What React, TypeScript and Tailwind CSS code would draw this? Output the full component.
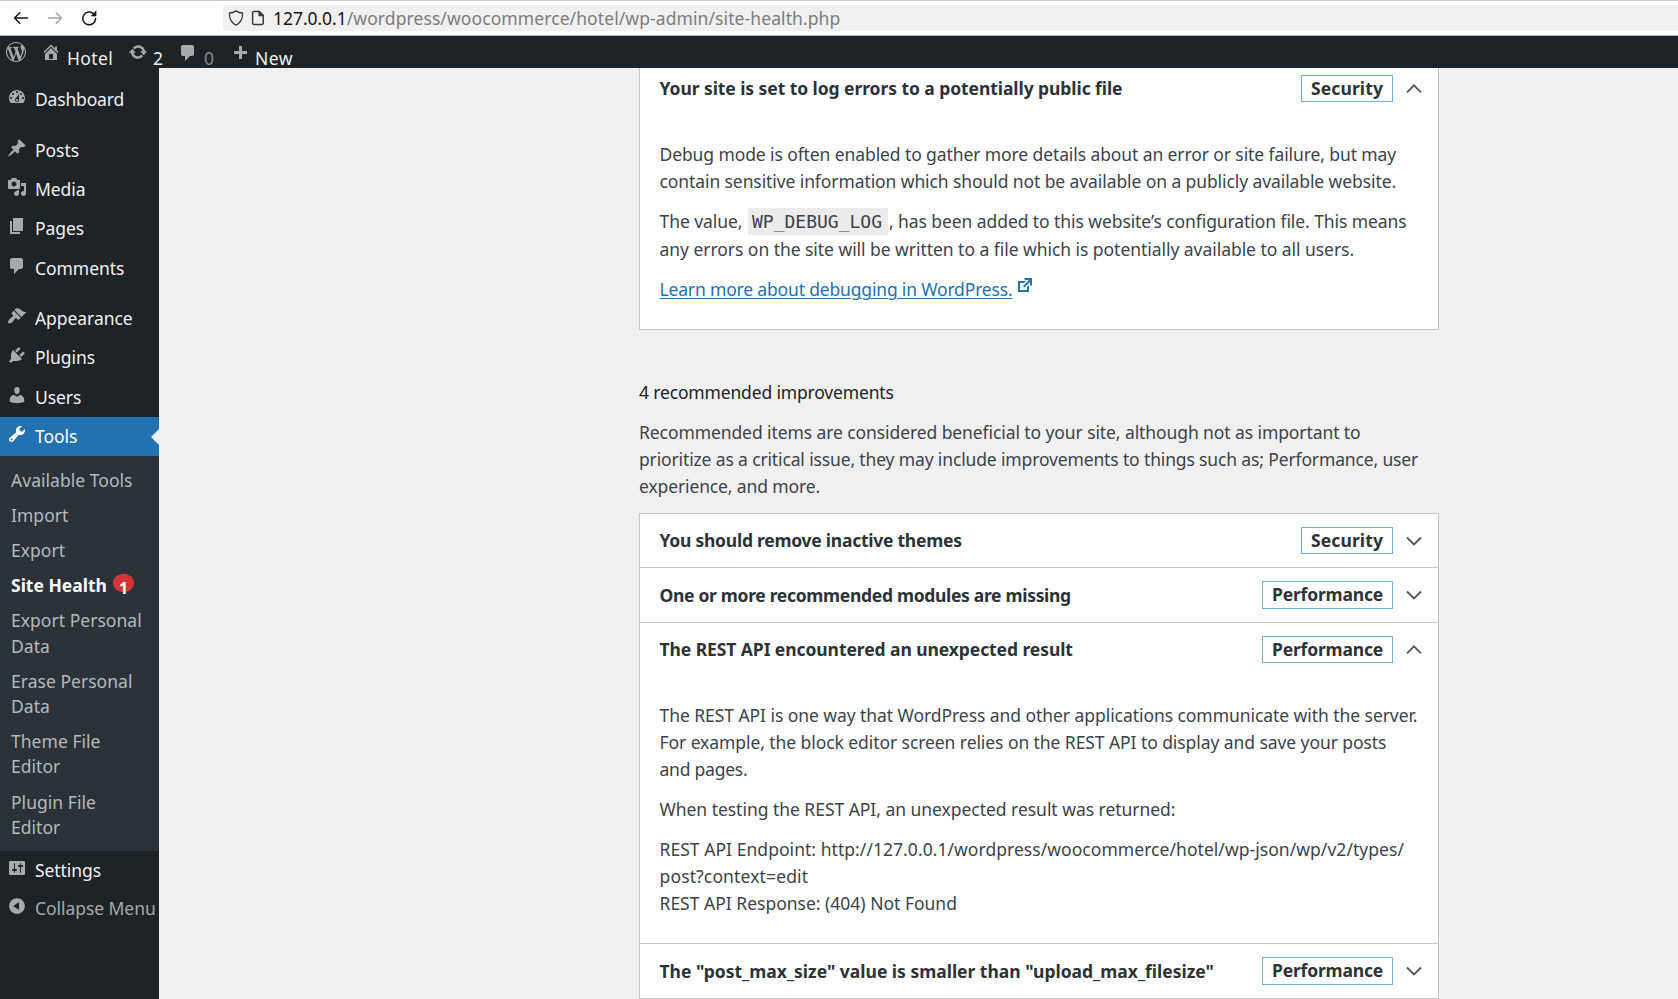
import type { ReactNode } from "react";

const icons = {
  wordpress:
    "M20 10c0-5.51-4.49-10-10-10C4.48 0 0 4.49 0 10c0 5.52 4.48 10 10 10 5.51 0 10-4.48 10-10zM7.78 15.37L4.37 6.22c.55-.02 1.17-.08 1.17-.08.5-.06.44-1.13-.06-1.11 0 0-1.45.11-2.37.11-.18 0-.37 0-.58-.01C4.12 2.69 6.87 1.11 10 1.11c2.33 0 4.45.87 6.05 2.34-.68-.11-1.65.39-1.65 1.58 0 .74.45 1.36.9 2.1.35.61.55 1.36.55 2.46 0 1.49-1.4 5-1.4 5l-3.03-8.37c.54-.02.82-.17.82-.17.5-.05.44-1.25-.06-1.22 0 0-1.44.12-2.38.12-.87 0-2.33-.12-2.33-.12-.5-.03-.56 1.2-.06 1.22l.92.08 1.26 3.41zM17.41 10c.24-.64.74-1.87.43-4.25.7 1.29 1.05 2.71 1.05 4.25 0 3.29-1.73 6.24-4.4 7.78.97-2.59 1.94-5.2 2.92-7.78zM6.1 18.09C3.12 16.65 1.11 13.53 1.11 10c0-1.3.23-2.48.72-3.59C3.25 10.3 4.67 14.2 6.1 18.09zm4.03-6.63l2.58 6.98c-.86.29-1.76.45-2.71.45-.79 0-1.57-.11-2.29-.33.81-2.38 1.62-4.74 2.42-7.1z",
  home: "M16 8.5l1.53 1.53-1.06 1.06L10 4.6l-6.47 6.49-1.06-1.06L10 2.5l4 4v-2h2v4zm-6-2.46l6 5.99V18H4v-5.97zM12 17v-5H8v5h4z",
  update:
    "M10.2 3.28c3.53 0 6.43 2.61 6.92 6h2.08l-3.5 4-3.5-4h2.32c-.45-1.97-2.21-3.45-4.32-3.45-1.45 0-2.73.71-3.54 1.78L4.95 5.66C6.23 4.2 8.11 3.28 10.2 3.28zm-.4 13.44c-3.52 0-6.43-2.61-6.92-6H.8l3.5-4c1.17 1.33 2.33 2.67 3.5 4H5.48c.45 1.97 2.21 3.45 4.32 3.45 1.45 0 2.73-.71 3.54-1.78l1.71 1.95c-1.28 1.46-3.15 2.38-5.25 2.38z",
  plus: "M17 7v3h-5v5H9v-5H4V7h5V2h3v5h5z",
  dashboard:
    "M3.76 16h12.48c1.1-1.37 1.76-3.11 1.76-5 0-4.42-3.58-8-8-8s-8 3.58-8 8c0 1.89.66 3.63 1.76 5zM10 4c.55 0 1 .45 1 1s-.45 1-1 1-1-.45-1-1 .45-1 1-1zM6 6c.55 0 1 .45 1 1s-.45 1-1 1-1-.45-1-1 .45-1 1-1zm8 0c.55 0 1 .45 1 1s-.45 1-1 1-1-.45-1-1 .45-1 1-1zm-5.37 5.55L12 7v6c0 1.1-.9 2-2 2s-2-.9-2-2c0-.57.24-1.08.63-1.45zM4 10c.55 0 1 .45 1 1s-.45 1-1 1-1-.45-1-1 .45-1 1-1zm12 0c.55 0 1 .45 1 1s-.45 1-1 1-1-.45-1-1 .45-1 1-1zm-5 3c0-.55-.45-1-1-1s-1 .45-1 1 .45 1 1 1 1-.45 1-1z",
  post: "M10.44 3.02l1.82-1.82 6.36 6.35-1.83 1.82c-1.05-.68-2.48-.57-3.41.36l-.75.75c-.92.93-1.04 2.35-.35 3.41l-1.83 1.82-2.41-2.41-2.8 2.79c-.42.42-3.38 2.71-3.8 2.29s1.86-3.39 2.28-3.81l2.79-2.79L4.1 9.36l1.83-1.82c1.05.69 2.48.57 3.4-.36l.75-.75c.93-.92 1.05-2.35.36-3.41z",
  media:
    "M13 11V4c0-.55-.45-1-1-1h-1.67L9 1H5L3.67 3H2c-.55 0-1 .45-1 1v7c0 .55.45 1 1 1h10c.55 0 1-.45 1-1zM7 4.5c1.38 0 2.5 1.12 2.5 2.5S8.38 9.5 7 9.5 4.5 8.38 4.5 7 5.62 4.5 7 4.5zM14 6h5v10.5c0 1.38-1.12 2.5-2.5 2.5S14 17.88 14 16.5s1.12-2.5 2.5-2.5c.17 0 .34.02.5.05V9h-3V6zm-4 8.05V13h2v3.5c0 1.38-1.12 2.5-2.5 2.5S7 17.88 7 16.5 8.12 14 9.5 14c.17 0 .34.02.5.05z",
  page: "M6 15V2h10v13H6zm-1 1h8v2H3V5h2v11z",
  comments:
    "M5 2h9c1.1 0 2 .9 2 2v7c0 1.1-.9 2-2 2h-2l-5 5v-5H5c-1.1 0-2-.9-2-2V4c0-1.1.9-2 2-2z",
  appearance:
    "M14.48 11.06L7.41 3.99l1.5-1.5c.5-.56 2.3-.47 3.51.32 1.21.8 1.43 1.28 2.91 2.1 1.18.64 2.45 1.26 4.45.85zm-.71.71L6.7 4.7 4.93 6.47c-.39.39-.39 1.02 0 1.41l1.06 1.06c.39.39.39 1.03 0 1.42-.6.6-1.43 1.11-2.21 1.69-.35.26-.7.53-1.01.84C1.43 14.23.4 16.08 1.4 17.07c.99 1 2.84-.03 4.18-1.36.31-.31.58-.66.85-1.02.57-.78 1.08-1.61 1.69-2.21.39-.39 1.02-.39 1.41 0l1.06 1.06c.39.39 1.02.39 1.41 0z",
  plugins:
    "M13.11 4.36L9.87 7.6 8 5.73l3.24-3.24c.35-.34 1.05-.2 1.56.32.52.51.66 1.21.31 1.55zm-8 1.77l.91-1.12 9.01 9.01-1.19.84c-.71.71-2.63 1.16-3.82 1.16H6.14L4.9 17.26c-.59.59-1.54.59-2.12 0-.59-.58-.59-1.53 0-2.12l1.24-1.24v-3.88c0-1.13.4-3.19 1.09-3.89zm7.26 3.97l3.24-3.24c.34-.35 1.04-.21 1.55.31.52.51.66 1.21.31 1.55l-3.24 3.25z",
  users:
    "M10 9.25c-2.27 0-2.73-3.44-2.73-3.44C7 4.02 7.82 2 9.97 2c2.16 0 2.98 2.02 2.71 3.81 0 0-.41 3.44-2.68 3.44zm0 2.57L12.72 10c2.39 0 4.52 2.33 4.52 4.53v2.49s-3.65 1.13-7.24 1.13c-3.65 0-7.24-1.13-7.24-1.13v-2.49c0-2.25 1.94-4.48 4.47-4.48z",
  tools:
    "M16.68 9.77c-1.34 1.34-3.3 1.67-4.95.99l-5.41 6.52c-.99.99-2.59.99-3.58 0s-.99-2.59 0-3.57l6.52-5.42c-.68-1.65-.35-3.61.99-4.95 1.28-1.28 3.12-1.62 4.72-1.06l-2.89 2.89 2.82 2.82 2.86-2.87c.53 1.58.18 3.39-1.08 4.65zM3.81 16.21c.4.39 1.04.39 1.43 0 .4-.4.4-1.04 0-1.43-.39-.4-1.03-.4-1.43 0-.39.39-.39 1.03 0 1.43z",
  settings:
    "M18 16V4c0-.55-.45-1-1-1H3c-.55 0-1 .45-1 1v12c0 .55.45 1 1 1h14c.55 0 1-.45 1-1zM8 11h1c.55 0 1 .45 1 1s-.45 1-1 1H8v1.5c0 .28-.22.5-.5.5s-.5-.22-.5-.5V13H6c-.55 0-1-.45-1-1s.45-1 1-1h1V5.5c0-.28.22-.5.5-.5s.5.22.5.5V11zm5-2h-1c-.55 0-1-.45-1-1s.45-1 1-1h1V5.5c0-.28.22-.5.5-.5s.5.22.5.5V7h1c.55 0 1 .45 1 1s-.45 1-1 1h-1v5.5c0 .28-.22.5-.5.5s-.5-.22-.5-.5V9z",
  collapse:
    "M10 2.16c4.33 0 7.84 3.51 7.84 7.84s-3.51 7.84-7.84 7.84S2.16 14.33 2.16 10 5.71 2.16 10 2.16zm2 11.72V6.12L6.18 9.97z",
  external:
    "M9 3h8v8l-2-1V6.92l-5.6 5.59-1.41-1.41L14.08 5H10zm3 12v-3l2-2v7H3V6h8L9 8H5v7h7z",
};

type IconName = keyof typeof icons;

function Icon({ name, className = "size-5" }: { name: IconName; className?: string }) {
  return (
    <svg viewBox="0 0 20 20" fill="currentColor" fillRule="evenodd" className={`shrink-0 ${className}`}>
      <path d={icons[name]} />
    </svg>
  );
}

function BrowserBar() {
  return (
    <div className="flex h-9 items-center border-y border-t-[#cccccc] border-b-[#b8b8bd] bg-white">
      <svg viewBox="0 0 16 14" className="ml-[13px] h-[14px] w-4 shrink-0 fill-none stroke-[#15141a]" strokeWidth="1.5" strokeLinecap="round" strokeLinejoin="round">
        <path d="M14.5 7H1.5M6.8 1.7L1.5 7l5.3 5.3" />
      </svg>
      <svg viewBox="0 0 16 14" className="ml-[18px] h-[14px] w-4 shrink-0 fill-none stroke-[#a5a5a8]" strokeWidth="1.5" strokeLinecap="round" strokeLinejoin="round">
        <path d="M1.5 7h13M9.2 1.7L14.5 7l-5.3 5.3" />
      </svg>
      <svg viewBox="0 0 16 16" className="ml-[18px] size-4 shrink-0 fill-none stroke-[#15141a]" strokeWidth="1.5" strokeLinecap="round">
        <path d="M14.600 8.600A6.400 6.400 0 1 1 12.800 3.900" />
        <path d="M15 1.500v4.400h-4.400z" fill="#15141a" strokeWidth="0.8" strokeLinejoin="round" />
      </svg>
      <div className="ml-[126px] flex h-[26px] grow items-center rounded-l bg-[#f0f0f0]">
        <svg viewBox="0 0 16 16" className="ml-[5px] size-4 shrink-0 fill-none stroke-[#3a3a3e]" strokeWidth="1.3" strokeLinejoin="round">
          <path d="M8 .9c2 1.4 4.2 2.1 6.6 2.1.2 5.6-2 9.8-6.6 12.1C3.400 12.800 1.200 8.600 1.400 3 3.800 3 6 2.300 8 .9z" />
        </svg>
        <svg viewBox="0 0 14 16" className="ml-[7px] h-4 w-[14px] shrink-0 fill-none stroke-[#3a3a3e]" strokeWidth="1.5" strokeLinejoin="round">
          <path d="M2.800 1.600h5.400l4 4v7.600a1.200 1.200 0 0 1-1.200 1.200H2.800a1.200 1.200 0 0 1-1.200-1.200V2.800a1.200 1.200 0 0 1 1.200-1.200z" />
          <path d="M8.200 1.600v4h4z" fill="#3a3a3e" />
        </svg>
        <div className="ml-2 flex text-[17.5px] leading-6 whitespace-nowrap">
          <span className="tracking-[-0.05px] text-[#15141a]">127.0.0.1</span>
          <span className="tracking-[0.09px] text-[#7c7c80]">/wordpress/woocommerce/hotel/wp-admin/site-health.php</span>
        </div>
      </div>
    </div>
  );
}

function AdminBar() {
  return (
    <div className="flex h-8 items-start bg-[#1d2327] text-[17.5px] leading-6 whitespace-nowrap text-[#f0f0f1]">
      <Icon name="wordpress" className="mt-[6px] ml-[6px] size-5 text-[#a7aaad]" />
      <Icon name="home" className="mt-[6px] ml-[15px] size-5 text-[#a7aaad]" />
      <span className="mt-[10px] ml-[6px] w-[48px] tracking-[0.35px]">Hotel</span>
      <Icon name="update" className="mt-[6px] ml-[13px] size-5 text-[#a7aaad]" />
      <span className="mt-[10px] ml-[5px] w-[11px]">2</span>
      <Icon name="comments" className="mt-[7px] ml-[14px] size-5 text-[#a7aaad]" />
      <span className="mt-[10px] ml-[6px] w-[11px] text-[#85898d]">0</span>
      <Icon name="plus" className="mt-2 ml-[15px] size-5 text-[#a7aaad]" />
      <span className="mt-[10px] ml-[5px] tracking-[0.45px]">New</span>
    </div>
  );
}

function MenuItem({ icon, label, tone = "normal" }: { icon: IconName; label: ReactNode; tone?: "normal" | "active" | "muted" }) {
  const row =
    tone === "active" ? "bg-[#2271b1] text-white" : tone === "muted" ? "text-[#a7aaad]" : "text-[#f0f0f1]";
  const glyph = tone === "active" ? "text-white" : "text-[#a7aaad]";
  return (
    <li className={`flex h-[39.4px] items-start ${row}`}>
      <Icon name={icon} className={`mt-[7px] ml-[7px] size-5 ${glyph}`} />
      <span className="mt-[7px] ml-2 leading-6 tracking-[-0.06px] whitespace-nowrap">{label}</span>
      {tone === "active" && (
        <svg viewBox="0 0 8 16" className="mt-3 ml-auto h-4 w-2 fill-[#f0f0f0]">
          <path d="M8 0v16L0 8z" />
        </svg>
      )}
    </li>
  );
}

function SubItem({ children }: { children: ReactNode }) {
  return <li className="py-[5px] pl-[11px] leading-[25.2px] tracking-[0.03px] whitespace-nowrap">{children}</li>;
}

function Sidebar() {
  return (
    <nav className="w-[159px] shrink-0 bg-[#1d2327] pt-3 text-[17.5px]">
      <ul>
        <MenuItem icon="dashboard" label={<span className="tracking-[-0.17px]">Dashboard</span>} />
        <li className="h-[11.300px]" />
        <MenuItem icon="post" label="Posts" />
        <MenuItem icon="media" label="Media" />
        <MenuItem icon="page" label="Pages" />
        <MenuItem icon="comments" label="Comments" />
        <li className="h-[10.500px]" />
        <MenuItem icon="appearance" label="Appearance" />
        <MenuItem icon="plugins" label="Plugins" />
        <MenuItem icon="users" label="Users" />
        <MenuItem icon="tools" label="Tools" tone="active" />
      </ul>
      <ul className="h-[394.600px] bg-[#2c3338] pt-[6.200px] text-[#b4b9be]">
        <SubItem>Available Tools</SubItem>
        <SubItem>Import</SubItem>
        <SubItem>Export</SubItem>
        <li className="flex h-[35.2px] items-start pt-[5px] pl-[11px] leading-[25.2px] font-bold text-white">
          <span className="whitespace-nowrap">Site Health</span>
          <span className="mt-px ml-[6px] flex h-[18px] w-[21px] justify-center rounded-[9px] bg-[#d63638] pt-[3px] text-[16px] leading-[22px]">1</span>
        </li>
        <SubItem>Export Personal<br />Data</SubItem>
        <SubItem>Erase Personal<br />Data</SubItem>
        <SubItem>Theme File<br />Editor</SubItem>
        <SubItem>Plugin File<br />Editor</SubItem>
      </ul>
      <ul>
        <MenuItem icon="settings" label="Settings" />
        <li className="-mt-[1.500px]">
          <ul>
            <MenuItem icon="collapse" label="Collapse Menu" tone="muted" />
          </ul>
        </li>
      </ul>
    </nav>
  );
}

function Line({ track, children }: { track: string; children: ReactNode }) {
  return <span className={`block whitespace-nowrap ${track}`}>{children}</span>;
}

function IssueHeader({ title, track, badge, open = false, className }: {
  title: string;
  track: string;
  badge: "Security" | "Performance";
  open?: boolean;
  className: string;
}) {
  return (
    <div className={`flex items-center pr-[16.500px] pl-[19.500px] font-bold text-[#2c3338] ${className}`}>
      <span className={`whitespace-nowrap ${track}`}>{title}</span>
      <span className={`ml-auto flex h-full items-start justify-center border border-[#72aee6] leading-[25px] ${badge === "Security" ? "w-[92px] tracking-[0.1px]" : "w-[131px] tracking-[-0.19px]"}`}>
        {badge}
      </span>
      <svg viewBox="0 0 16 10" className="ml-[12.500px] h-[10px] w-4 fill-none stroke-[#50575e]" strokeWidth="1.8">
        <path d={open ? "M1 8.300L8 1.300l7 7" : "M1 1.500l7 7 7-7"} />
      </svg>
    </div>
  );
}

function Main() {
  return (
    <main className="ml-[480px] w-[800px] shrink-0 text-[17.5px] leading-[27px] text-[#3c434a]">
      <section className="h-[262px] border-x border-b border-[#c3c4c7] bg-white pt-[7px]">
        <IssueHeader title="Your site is set to log errors to a potentially public file" track="tracking-[-0.068px]" badge="Security" open className="h-[27px]" />
        <div className="flex flex-col gap-[13px] pt-[39px] pl-[19.500px]">
          <p>
            <Line track="tracking-[-0.1px]">Debug mode is often enabled to gather more details about an error or site failure, but may</Line>
            <Line track="tracking-[-0.094px]">contain sensitive information which should not be available on a publicly available website.</Line>
          </p>
          <div>
            <div className="flex h-7 whitespace-nowrap">
              <span className="w-[88.500px] tracking-[-0.056px]">The value,</span>
              <code className="h-[27px] w-[140px] bg-[#ebebeb] pl-1 font-['DejaVu_Sans_Mono',monospace] text-[18px]">WP_DEBUG_LOG</code>
              <span className="ml-px tracking-[-0.08px]">, has been added to this website’s configuration file. This means</span>
            </div>
            <Line track="tracking-[-0.045px]">any errors on the site will be written to a file which is potentially available to all users.</Line>
          </div>
          <div className="flex text-[#2271b1]">
            <a className="tracking-[-0.169px] whitespace-nowrap underline decoration-1 underline-offset-2">Learn more about debugging in WordPress.</a>
            <Icon name="external" className="-mt-px ml-[2.500px] size-5" />
          </div>
        </div>
      </section>

      <h2 className="mt-[49px] text-[#1d2327]">
        <Line track="tracking-[-0.16px]">4 recommended improvements</Line>
      </h2>
      <p className="mt-[13px]">
        <Line track="tracking-[-0.09px]">Recommended items are considered beneficial to your site, although not as important to</Line>
        <Line track="tracking-[-0.142px]">prioritize as a critical issue, they may include improvements to things such as; Performance, user</Line>
        <Line track="tracking-[-0.128px]">experience, and more.</Line>
      </p>

      <section className="mt-[13px] divide-y divide-[#c3c4c7] border border-[#c3c4c7] bg-white">
        <div className="py-[13px]">
          <IssueHeader title="You should remove inactive themes" track="tracking-[-0.25px]" badge="Security" className="h-[27px]" />
        </div>
        <div className="py-[13px]">
          <IssueHeader title="One or more recommended modules are missing" track="tracking-[-0.315px]" badge="Performance" className="h-7" />
        </div>
        <div className="h-[321px] pt-[13px]">
          <IssueHeader title="The REST API encountered an unexpected result" track="tracking-[-0.08px]" badge="Performance" open className="h-[27px]" />
          <div className="flex flex-col gap-[13px] pt-[39px] pl-[19.500px]">
            <p>
              <Line track="tracking-[-0.06px]">The REST API is one way that WordPress and other applications communicate with the server.</Line>
              <Line track="tracking-[-0.075px]">For example, the block editor screen relies on the REST API to display and save your posts</Line>
              <Line track="tracking-[-0.223px]">and pages.</Line>
            </p>
            <p>
              <Line track="tracking-[-0.034px]">When testing the REST API, an unexpected result was returned:</Line>
            </p>
            <p>
              <Line track="tracking-[0.047px]">REST API Endpoint: http://127.0.0.1/wordpress/woocommerce/hotel/wp-json/wp/v2/types/</Line>
              <Line track="tracking-[0.14px]">post?context=edit</Line>
              <Line track="tracking-[0px]">REST API Response: (404) Not Found</Line>
            </p>
          </div>
        </div>
        <div className="py-[13px]">
          <IssueHeader title={'The "post_max_size" value is smaller than "upload_max_filesize"'} track="tracking-[-0.012px]" badge="Performance" className="h-7" />
        </div>
      </section>
    </main>
  );
}

export default function App() {
  return (
    <div className="flex h-[999px] w-[1678px] flex-col overflow-hidden bg-[#f0f0f0] font-['Noto_Sans',sans-serif]">
      <BrowserBar />
      <AdminBar />
      <div className="flex min-h-0 grow">
        <Sidebar />
        <Main />
      </div>
    </div>
  );
}
